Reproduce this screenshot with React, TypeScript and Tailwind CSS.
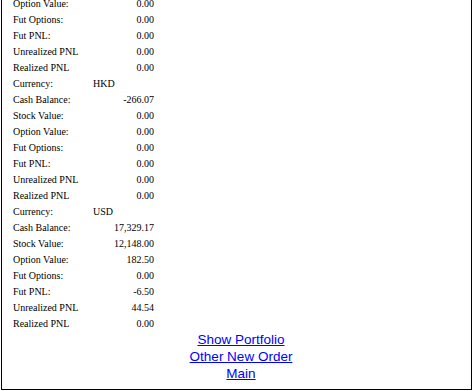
const sections = [
  {
    rows: [
      ["Option Value:", "0.00"],
      ["Fut Options:", "0.00"],
      ["Fut PNL:", "0.00"],
      ["Unrealized PNL", "0.00"],
      ["Realized PNL", "0.00"],
    ],
  },
  {
    currency: "HKD",
    rows: [
      ["Cash Balance:", "-266.07"],
      ["Stock Value:", "0.00"],
      ["Option Value:", "0.00"],
      ["Fut Options:", "0.00"],
      ["Fut PNL:", "0.00"],
      ["Unrealized PNL", "0.00"],
      ["Realized PNL", "0.00"],
    ],
  },
  {
    currency: "USD",
    rows: [
      ["Cash Balance:", "17,329.17"],
      ["Stock Value:", "12,148.00"],
      ["Option Value:", "182.50"],
      ["Fut Options:", "0.00"],
      ["Fut PNL:", "-6.50"],
      ["Unrealized PNL", "44.54"],
      ["Realized PNL", "0.00"],
    ],
  },
];

function Row({ label, value, left }: { label: string; value: string; left?: boolean }) {
  return (
    <div className="flex h-[16px] items-center">
      <div className="w-[80px]">{label}</div>
      <div className={left ? "w-[61px] text-left" : "w-[61px] text-right"}>{value}</div>
    </div>
  );
}

export default function App() {
  return (
    <div className="w-[473px] h-[391px] overflow-hidden bg-white flex flex-col justify-end pb-[1px]">
      <div className="ml-[1px] w-[471px] border-x border-b border-black pb-[7px]">
        <div
          className="pl-[11px] -mb-[1px] text-[10px] leading-[16px] text-black"
          style={{ fontFamily: '"Liberation Serif", serif' }}
        >
          {sections.map((s, i) => (
            <div key={i}>
              {s.currency && <Row label="Currency:" value={s.currency} left />}
              {s.rows.map((r, j) => (
                <Row key={j} label={r[0]} value={r[1]} />
              ))}
            </div>
          ))}
        </div>
        <div
          className="pl-[9px] flex flex-col items-center text-[13.5px] leading-[17px]"
          style={{ fontFamily: '"Liberation Sans", sans-serif' }}
        >
          <a href="#" className="text-[#0000ff] underline">Show Portfolio</a>
          <a href="#" className="text-[#0000ff] underline">Other New Order</a>
          <a href="#" className="text-[#0000ff] underline">Main</a>
        </div>
      </div>
    </div>
  );
}
